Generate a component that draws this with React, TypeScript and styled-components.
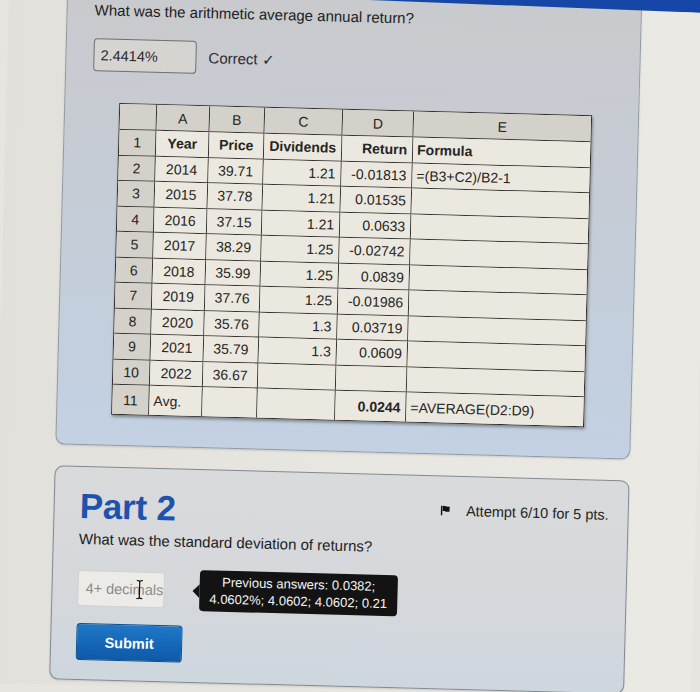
import React from 'react';
import styled, { createGlobalStyle } from 'styled-components';

const Global = createGlobalStyle`
  html, body { margin: 0; padding: 0; background: #e7e5df; }
  body { font-family: "Liberation Sans", Arial, sans-serif; color: #1e1e1e; overflow: hidden; }
  * { box-sizing: border-box; }
`;

const Page = styled.div`
  width: 700px;
  height: 692px;
  display: flex;
  flex-direction: column;
  background: linear-gradient(90deg, #e2e0da 0%, #e8e6e0 50%, #ebe9e3 100%);
  transform: rotate(1.5deg);
  transform-origin: 350px 346px;
`;

const TopBar = styled.div`
  flex-shrink: 0;
  position: relative;
  z-index: 1;
  height: 32px;
  margin: -28px -20px -6px -20px;
  background: #1747a6;
  clip-path: polygon(0 0, 100% 0, 100% 100%, 0 calc(100% - 9px));
`;

const Card = styled.section<{ $tone: 'blue' | 'gray' }>`
  margin-left: 58px;
  width: 575px;
  border-radius: 9px;
  border: 1px solid ${(p) => (p.$tone === 'blue' ? '#8e9aa8' : '#7f8994')};
  background: ${(p) =>
    p.$tone === 'blue'
      ? 'linear-gradient(180deg, #c9cacd 0%, #c5ccd6 45%, #c2d1e3 100%)'
      : 'linear-gradient(180deg, #d9dadb 0%, #d5d8db 55%, #ced6de 100%)'};
  box-shadow: 0 1px 2px rgba(0, 0, 0, 0.12);
`;

const FirstCard = styled(Card)`
  padding: 9px 28px 30px 27px;
  border-top-left-radius: 0;
  border-top-right-radius: 0;
`;

const SecondCard = styled(Card)`
  margin-top: 21px;
  padding: 19px 19px 19px 25px;
`;

const Question = styled.p`
  margin: 0;
  font-size: 15px;
  line-height: 18px;
  color: #1d1d1d;
`;

const AnswerRow = styled.div<{ $gap: number; $top: number }>`
  display: flex;
  align-items: center;
  gap: ${(p) => p.$gap}px;
  margin-top: ${(p) => p.$top}px;
`;

const DoneInput = styled.input`
  width: 103px;
  height: 33px;
  padding: 0 0 0 6px;
  border: 1px solid #6f6f6f;
  border-radius: 4px;
  background: #d5d4d1;
  font-family: "Liberation Sans", Arial, sans-serif;
  font-size: 14.5px;
  color: #2a2a2a;
  outline: none;
`;

const Status = styled.span`
  font-size: 15px;
  color: #2b2b2b;
`;

const Sheet = styled.div`
  display: grid;
  grid-template-columns: 37px 53px 55px 78px 71px 177px;
  grid-template-rows: 26px repeat(10, 25.5px) 29px;
  width: max-content;
  margin: 31px 0 0 27px;
  border: 1.5px solid #2f2d2a;
  background: #ebe8e0;
  box-shadow: 1px 2px 3px rgba(0, 0, 0, 0.35);
`;

const Cell = styled.div<{
  $head: boolean;
  $align: 'left' | 'center' | 'right';
  $bold: boolean;
  $lastCol: boolean;
  $lastRow: boolean;
}>`
  display: flex;
  align-items: center;
  justify-content: ${(p) =>
    p.$align === 'left' ? 'flex-start' : p.$align === 'right' ? 'flex-end' : 'center'};
  padding: 0 5px 0 ${(p) => (p.$align === 'left' ? '4px' : '5px')};
  background: ${(p) => (p.$head ? '#d4d1ca' : '#ebe8e0')};
  border-right: ${(p) => (p.$lastCol ? 'none' : '1px solid #34322f')};
  border-bottom: ${(p) => (p.$lastRow ? 'none' : '1px solid #34322f')};
  font-size: 14px;
  font-weight: ${(p) => (p.$bold ? 700 : 400)};
  color: #262522;
  white-space: nowrap;
  overflow: hidden;
`;

const HeadRow = styled.div`
  display: flex;
  justify-content: space-between;
  align-items: flex-start;
`;

const PartTitle = styled.h2`
  margin: 0;
  font-size: 35px;
  line-height: 40px;
  font-weight: 700;
  color: #1d52ad;
  letter-spacing: -0.2px;
`;

const Attempt = styled.div`
  display: flex;
  align-items: center;
  gap: 16px;
  margin-top: 6px;
  font-size: 14.5px;
  line-height: 18px;
  color: #222;
`;

const SecondQuestion = styled(Question)`
  margin-top: 4px;
`;

const FieldWrap = styled.div`
  position: relative;
  width: 87px;
  height: 36px;
`;

const OpenInput = styled.input`
  width: 100%;
  height: 100%;
  padding: 0 0 0 7px;
  border: 1px solid #d2d1cc;
  border-radius: 3px;
  background: #ecebe7;
  font-family: "Liberation Sans", Arial, sans-serif;
  font-size: 14.5px;
  color: #333;
  outline: none;
  &::placeholder { color: #8b8b8b; }
`;

const Cursor = styled.svg`
  position: absolute;
  left: 58px;
  top: 8px;
`;

const Tip = styled.div`
  position: relative;
  width: 198px;
  height: 41px;
  padding: 4px 6px;
  border-radius: 4px;
  background: #131313;
  color: #f4f4f4;
  font-size: 13px;
  line-height: 16.5px;
  text-align: center;
  &::before {
    content: '';
    position: absolute;
    left: -7px;
    top: 14px;
    border-style: solid;
    border-width: 7px 7px 7px 0;
    border-color: transparent #131313 transparent transparent;
  }
`;

const SubmitButton = styled.button`
  display: block;
  margin-top: 15px;
  width: 106px;
  height: 37px;
  border: 1px solid #0f4d92;
  border-radius: 4px;
  background: linear-gradient(180deg, #2078c7 0%, #1466b6 55%, #0f5aa7 100%);
  color: #fff;
  font-family: "Liberation Sans", Arial, sans-serif;
  font-size: 14.5px;
  font-weight: 700;
  padding: 0;
`;

type Align = 'left' | 'center' | 'right';

const letters = ['', 'A', 'B', 'C', 'D', 'E'];
const rows: string[][] = [
  ['1', 'Year', 'Price', 'Dividends', 'Return', 'Formula'],
  ['2', '2014', '39.71', '1.21', '-0.01813', '=(B3+C2)/B2-1'],
  ['3', '2015', '37.78', '1.21', '0.01535', ''],
  ['4', '2016', '37.15', '1.21', '0.0633', ''],
  ['5', '2017', '38.29', '1.25', '-0.02742', ''],
  ['6', '2018', '35.99', '1.25', '0.0839', ''],
  ['7', '2019', '37.76', '1.25', '-0.01986', ''],
  ['8', '2020', '35.76', '1.3', '0.03719', ''],
  ['9', '2021', '35.79', '1.3', '0.0609', ''],
  ['10', '2022', '36.67', '', '', ''],
  ['11', 'Avg.', '', '', '0.0244', '=AVERAGE(D2:D9)'],
];
const colAlign: Align[] = ['center', 'center', 'center', 'right', 'right', 'left'];

function Spreadsheet() {
  const total = rows.length + 1;
  return (
    <Sheet>
      {letters.map((l, c) => (
        <Cell
          key={`h${c}`}
          $head
          $align="center"
          $bold={false}
          $lastCol={c === 5}
          $lastRow={false}
        >
          {l}
        </Cell>
      ))}
      {rows.map((r, ri) =>
        r.map((v, c) => {
          const isAvg = ri === 10 && c === 1;
          const bold = (ri === 0 && c > 0) || (ri === 10 && c === 4);
          return (
            <Cell
              key={`${ri}-${c}`}
              $head={c === 0}
              $align={isAvg ? 'left' : colAlign[c]}
              $bold={bold}
              $lastCol={c === 5}
              $lastRow={ri + 2 === total}
            >
              {v}
            </Cell>
          );
        })
      )}
    </Sheet>
  );
}

export default function App() {
  return (
    <>
      <Global />
      <Page>
        <TopBar />
        <FirstCard $tone="blue">
          <Question>What was the arithmetic average annual return?</Question>
          <AnswerRow $gap={12} $top={19}>
            <DoneInput readOnly value="2.4414%" />
            <Status>Correct ✓</Status>
          </AnswerRow>
          <Spreadsheet />
        </FirstCard>
        <SecondCard $tone="gray">
          <HeadRow>
            <PartTitle>Part 2</PartTitle>
            <Attempt>
              <svg width="9" height="10" viewBox="0 0 9 10">
                <rect x="0" y="0" width="1.6" height="10" fill="#111" />
                <path d="M2 0.5 C4 -0.2 5 1.6 9 0.8 V6 C5 6.8 4 5 2 5.7 Z" fill="#111" />
              </svg>
              <span>Attempt 6/10 for 5 pts.</span>
            </Attempt>
          </HeadRow>
          <SecondQuestion>What was the standard deviation of returns?</SecondQuestion>
          <AnswerRow $gap={35} $top={19}>
            <FieldWrap>
              <OpenInput placeholder="4+ decimals" />
              <Cursor width="8" height="20" viewBox="0 0 8 20">
                <path
                  d="M1 1 H2.5 Q4 1 4 3 V17 Q4 19 2.5 19 H1 M7 1 H5.5 Q4 1 4 3 M4 17 Q4 19 5.5 19 H7"
                  fill="none"
                  stroke="#111"
                  strokeWidth="1.2"
                />
              </Cursor>
            </FieldWrap>
            <Tip>
              Previous answers: 0.0382;
              <br />
              4.0602%; 4.0602; 4.0602; 0.21
            </Tip>
          </AnswerRow>
          <SubmitButton>Submit</SubmitButton>
        </SecondCard>
      </Page>
    </>
  );
}
